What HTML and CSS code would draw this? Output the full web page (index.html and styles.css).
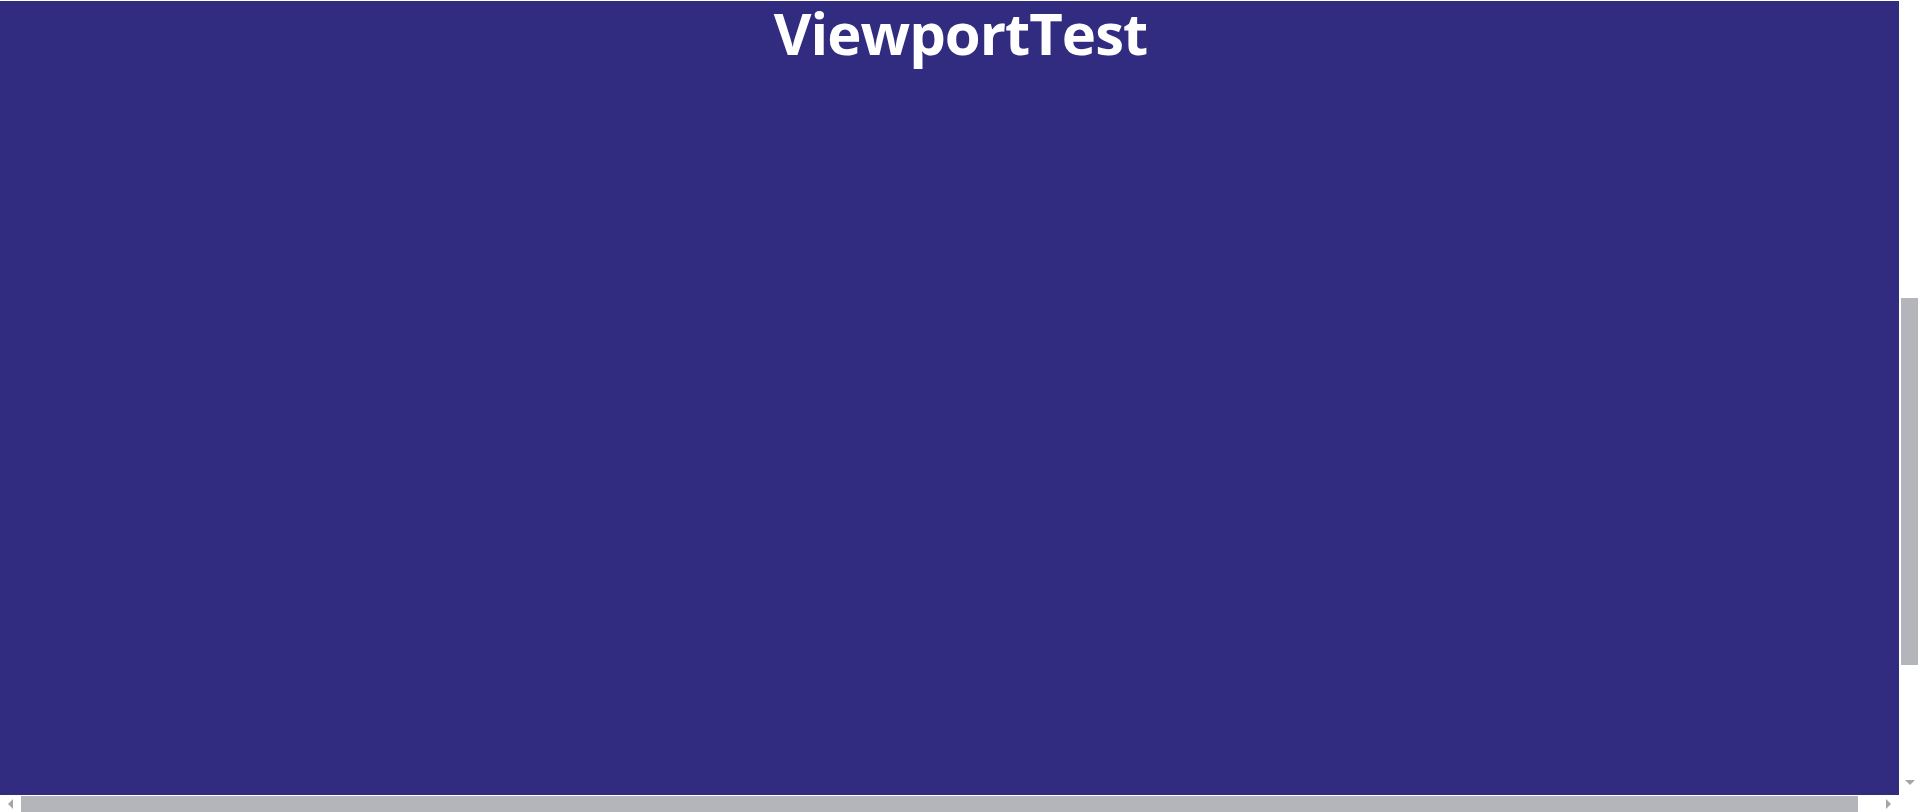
FILE: index.html
```html
<!DOCTYPE html>
<html>
<head>
<meta charset="utf-8">
<title>ViewportTest</title>
<link rel="stylesheet" href="styles.css">
</head>
<body>
<div class="window">
  <main class="viewport">
    <h1 class="title">ViewportTest</h1>
  </main>
  <div class="vscroll">
    <div class="vthumb"></div>
    <div class="vspacer"></div>
    <div class="arrow-down"></div>
  </div>
  <div class="hscroll">
    <div class="arrow-left"></div>
    <div class="hthumb"></div>
    <div class="arrow-right"></div>
  </div>
  <div class="corner"></div>
</div>
</body>
</html>
```

FILE: styles.css
```css
html, body {
  margin: 0;
  padding: 0;
  background: #ffffff;
  overflow: hidden;
}

.window {
  width: 1918px;
  height: 812px;
  display: grid;
  grid-template-columns: 1899px 19px;
  grid-template-rows: 795px 17px;
}

.viewport {
  background: #322c80;
  display: flex;
  justify-content: center;
  align-items: flex-start;
  padding-left: 22px;
  border-top: 1px solid #ffffff;
}

.title {
  margin: 0;
  color: #ffffff;
  font-family: "Open Sans", "Noto Sans", sans-serif;
  font-weight: 700;
  font-size: 58px;
  line-height: 64px;
  letter-spacing: -1px;
}

.vscroll {
  background: #ffffff;
  display: flex;
  flex-direction: column;
  align-items: flex-end;
}

.vthumb {
  margin-top: 298px;
  width: 17px;
  height: 367px;
  background: #b3b5ba;
}

.vspacer {
  flex: 1;
}

.arrow-down {
  align-self: center;
  margin-left: 2px;
  margin-bottom: 10px;
  width: 0;
  height: 0;
  border-left: 5px solid transparent;
  border-right: 5px solid transparent;
  border-top: 5px solid #a3a5aa;
}

.hscroll {
  background: #ffffff;
  display: flex;
  align-items: center;
  padding-top: 1px;
}

.arrow-left {
  width: 0;
  height: 0;
  margin-left: 8px;
  margin-right: 8px;
  border-top: 5px solid transparent;
  border-bottom: 5px solid transparent;
  border-right: 5px solid #a3a5aa;
}

.hthumb {
  width: 1837px;
  height: 16px;
  background: #b3b5ba;
}

.arrow-right {
  width: 0;
  height: 0;
  margin-left: 28px;
  border-top: 5px solid transparent;
  border-bottom: 5px solid transparent;
  border-left: 5px solid #a3a5aa;
}

.corner {
  background: #ffffff;
}
```
